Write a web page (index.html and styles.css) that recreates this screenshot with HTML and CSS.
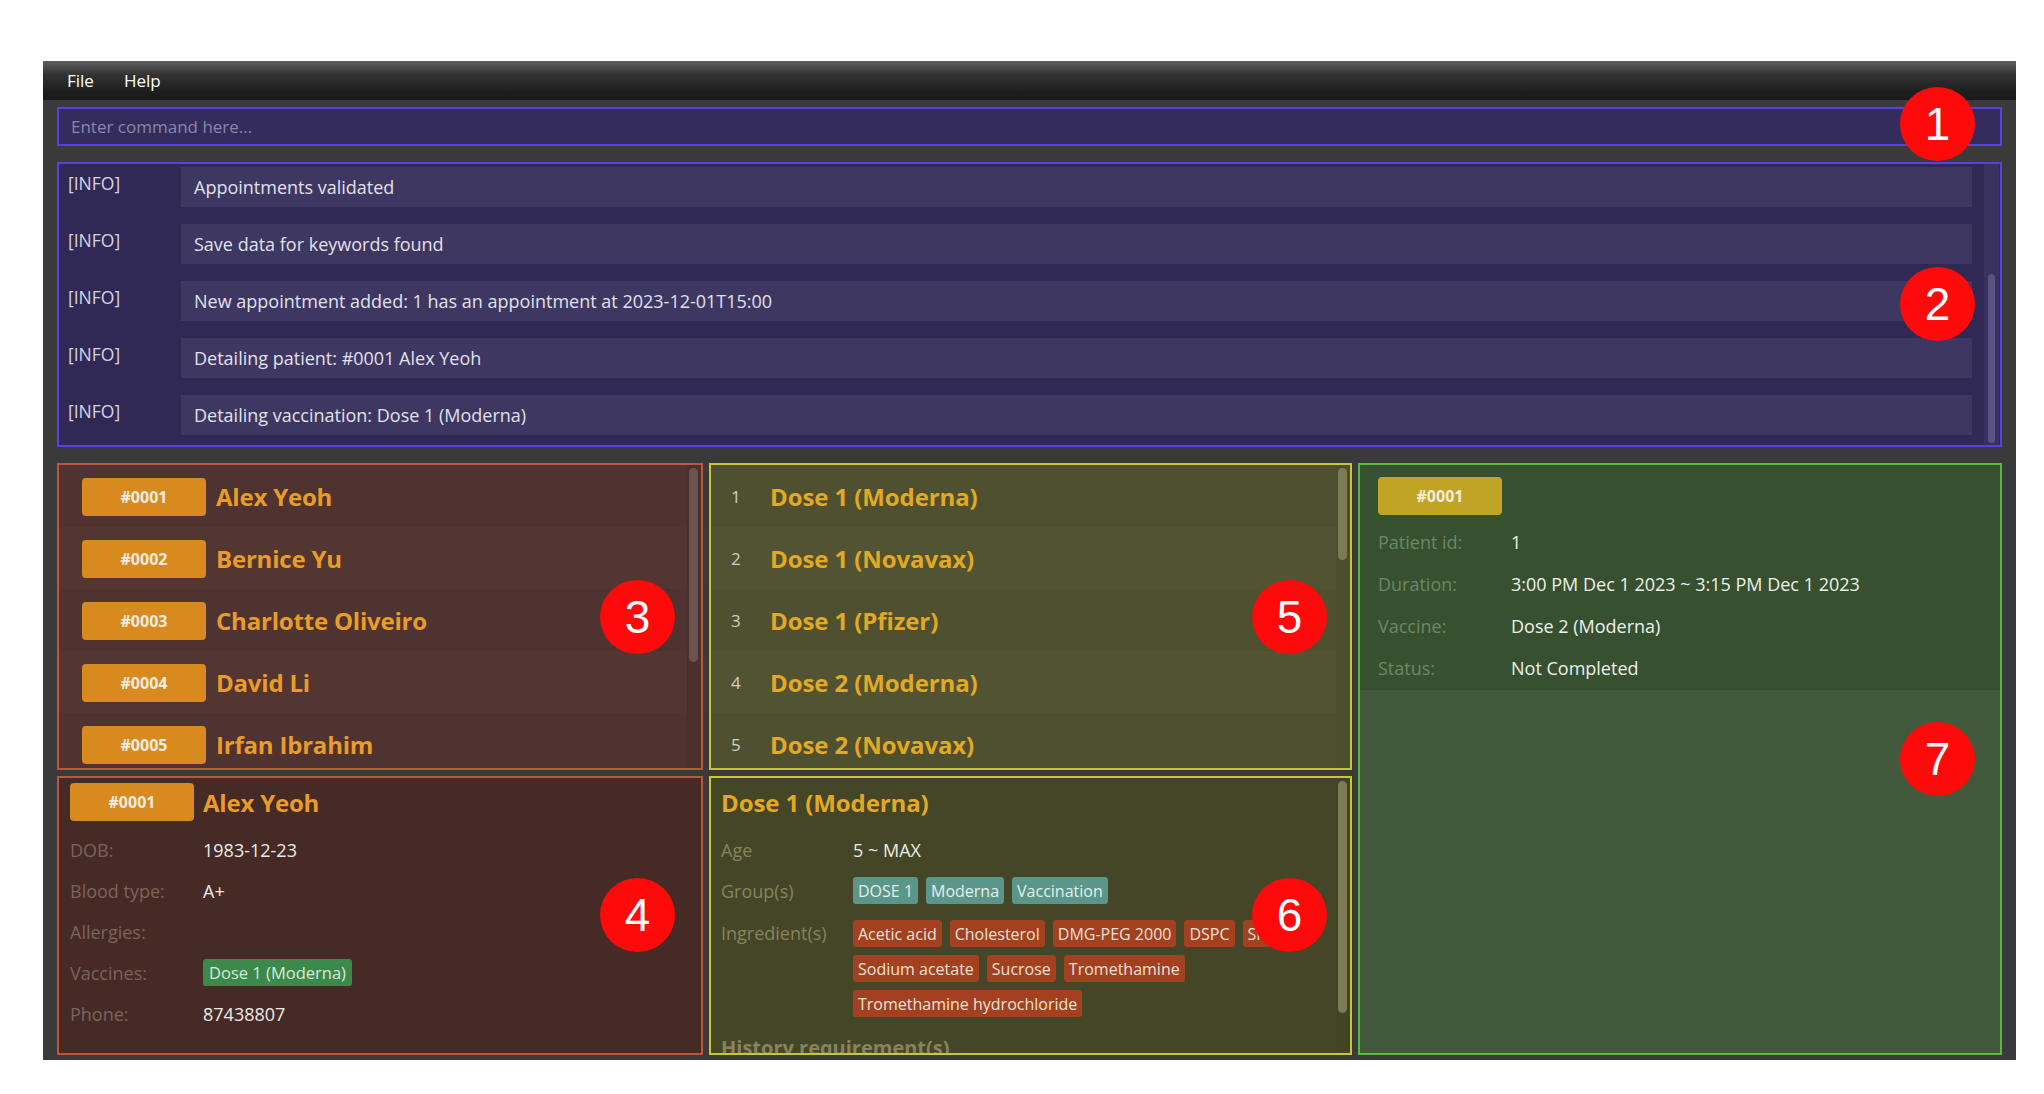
FILE: index.html
```html
<!DOCTYPE html>
<html>
<head>
<meta charset="utf-8">
<link rel="stylesheet" href="styles.css">
</head>
<body>
<div class="window">
  <div class="menubar">
    <span class="menu-item">File</span>
    <span class="menu-item">Help</span>
  </div>
  <div class="content">
    <div class="command">Enter command here...</div>
    <div class="results">
      <div class="result-list">
        <div class="result-row"><div class="result-label">[INFO]</div><div class="result-msg">Appointments validated</div></div>
        <div class="result-row"><div class="result-label">[INFO]</div><div class="result-msg">Save data for keywords found</div></div>
        <div class="result-row"><div class="result-label">[INFO]</div><div class="result-msg">New appointment added: 1 has an appointment at 2023-12-01T15:00</div></div>
        <div class="result-row"><div class="result-label">[INFO]</div><div class="result-msg">Detailing patient: #0001 Alex Yeoh</div></div>
        <div class="result-row"><div class="result-label">[INFO]</div><div class="result-msg">Detailing vaccination: Dose 1 (Moderna)</div></div>
      </div>
      <div class="result-gap"></div>
      <div class="result-track"><div class="result-thumb"></div></div>
    </div>
    <div class="panels">
      <div class="col">
        <div class="panel patients">
          <div class="list">
            <div class="prow"><span class="badge orange">#0001</span><span class="pname">Alex Yeoh</span></div>
            <div class="prow"><span class="badge orange">#0002</span><span class="pname">Bernice Yu</span></div>
            <div class="prow"><span class="badge orange">#0003</span><span class="pname">Charlotte Oliveiro</span></div>
            <div class="prow"><span class="badge orange">#0004</span><span class="pname">David Li</span></div>
            <div class="prow"><span class="badge orange">#0005</span><span class="pname">Irfan Ibrahim</span></div>
          </div>
          <div class="track"><div class="thumb thumb-patients"></div></div>
        </div>
        <div class="panel patient-detail">
          <div class="head"><span class="badge orange">#0001</span><span class="pname">Alex Yeoh</span></div>
          <div class="drow first"><span class="dlabel">DOB:</span><span class="dval">1983-12-23</span></div>
          <div class="drow"><span class="dlabel">Blood type:</span><span class="dval">A+</span></div>
          <div class="drow"><span class="dlabel">Allergies:</span><span class="dval"></span></div>
          <div class="drow"><span class="dlabel">Vaccines:</span><span class="dval"><span class="tag green">Dose 1 (Moderna)</span></span></div>
          <div class="drow"><span class="dlabel">Phone:</span><span class="dval">87438807</span></div>
        </div>
      </div>
      <div class="col">
        <div class="panel vaccines">
          <div class="list">
            <div class="vrow"><span class="vnum">1</span><span class="vname">Dose 1 (Moderna)</span></div>
            <div class="vrow"><span class="vnum">2</span><span class="vname">Dose 1 (Novavax)</span></div>
            <div class="vrow"><span class="vnum">3</span><span class="vname">Dose 1 (Pfizer)</span></div>
            <div class="vrow"><span class="vnum">4</span><span class="vname">Dose 2 (Moderna)</span></div>
            <div class="vrow"><span class="vnum">5</span><span class="vname">Dose 2 (Novavax)</span></div>
          </div>
          <div class="track"><div class="thumb thumb-vaccines"></div></div>
        </div>
        <div class="panel vaccine-detail">
          <div class="vd-body">
            <div class="vd-title">Dose 1 (Moderna)</div>
            <div class="vd-row age"><span class="vlabel">Age</span><span class="vval">5 ~ MAX</span></div>
            <div class="vd-row groups"><span class="vlabel">Group(s)</span>
              <span class="tags"><span class="tag teal">DOSE 1</span><span class="tag teal">Moderna</span><span class="tag teal">Vaccination</span></span>
            </div>
            <div class="vd-row ingredients"><span class="vlabel">Ingredient(s)</span>
              <span class="tags"><span class="tag rust">Acetic acid</span><span class="tag rust">Cholesterol</span><span class="tag rust">DMG-PEG 2000</span><span class="tag rust">DSPC</span><span class="tag rust">SM-102</span><span class="tag rust">Sodium acetate</span><span class="tag rust">Sucrose</span><span class="tag rust">Tromethamine</span><span class="tag rust">Tromethamine hydrochloride</span></span>
            </div>
            <div class="vd-history">History requirement(s)</div>
          </div>
          <div class="track"><div class="thumb thumb-vd"></div></div>
        </div>
      </div>
      <div class="col">
        <div class="panel appointment">
          <div class="appt-top">
            <span class="badge gold">#0001</span>
            <div class="arow first"><span class="alabel">Patient id:</span><span class="aval">1</span></div>
            <div class="arow"><span class="alabel">Duration:</span><span class="aval">3:00 PM Dec 1 2023 ~ 3:15 PM Dec 1 2023</span></div>
            <div class="arow"><span class="alabel">Vaccine:</span><span class="aval">Dose 2 (Moderna)</span></div>
            <div class="arow"><span class="alabel">Status:</span><span class="aval">Not Completed</span></div>
          </div>
        </div>
      </div>
    </div>
  </div>
</div>
<div class="marker m1">1</div>
<div class="marker m2">2</div>
<div class="marker m3">3</div>
<div class="marker m4">4</div>
<div class="marker m5">5</div>
<div class="marker m6">6</div>
<div class="marker m7">7</div>
</body>
</html>
```

FILE: styles.css
```css
* { box-sizing: border-box; }
html, body { margin: 0; padding: 0; }
body {
  background: #ffffff;
  font-family: "Open Sans", "Noto Sans", "DejaVu Sans", sans-serif;
  position: relative;
  width: 2044px;
  height: 1094px;
  overflow: hidden;
}
.window {
  margin: 61px 0 0 43px;
  width: 1973px;
  height: 999px;
  background: #3a3a3a;
  display: flex;
  flex-direction: column;
}
.menubar {
  height: 39px;
  flex: none;
  background: linear-gradient(#5f5f5f 0%, #333333 35%, #1d1d1d 80%, #1a1a1a 100%);
  display: flex;
  align-items: center;
  padding-left: 24px;
  gap: 30px;
  color: #ffffff;
  font-size: 17px;
}
.content {
  flex: 1;
  min-height: 0;
  padding: 7px 14px 5px 14px;
  display: flex;
  flex-direction: column;
}
.command {
  height: 39px;
  flex: none;
  border: 2px solid #5542e2;
  background: #342c5d;
  color: #8b86ab;
  font-size: 17px;
  padding-left: 12px;
  display: flex;
  align-items: center;
}
.results {
  margin-top: 16px;
  height: 285px;
  flex: none;
  border: 2px solid #5542e2;
  background: #302955;
  display: flex;
}
.result-list { flex: 1; padding-top: 3px; overflow: hidden; }
.result-row { height: 57px; display: flex; }
.result-label {
  width: 122px;
  padding-left: 9px;
  padding-top: 4px;
  color: #d6d4e2;
  font-size: 17.5px;
}
.result-msg {
  height: 40px;
  flex: 1;
  background: #3d3762;
  color: #e2e0ec;
  font-size: 18px;
  padding-left: 13px;
  display: flex;
  align-items: center;
}
.result-gap { width: 12px; }
.result-track {
  width: 15px;
  margin-right: 1px;
  background: #39325f;
  padding: 110px 4px 2px 4px;
}
.result-thumb { height: 100%; background: #5a5283; border-radius: 4px; }

.panels {
  margin-top: 16px;
  flex: 1;
  min-height: 0;
  display: grid;
  grid-template-columns: 646px 643px 1fr;
  grid-template-rows: minmax(0, 1fr);
  column-gap: 6px;
}
.col { display: flex; flex-direction: column; gap: 6px; min-height: 0; }
.panel { border: 2px solid; overflow: hidden; display: flex; min-height: 0; }
.list { flex: 1; overflow: hidden; }
.track { width: 14px; padding: 3px 3px 0 2px; }
.thumb { border-radius: 5px; }

.badge {
  display: inline-flex;
  align-items: center;
  justify-content: center;
  width: 124px;
  height: 38px;
  border-radius: 4px;
  color: #f6ece0;
  font-weight: 700;
  font-size: 16px;
  flex: none;
}
.badge.orange { background: #d98a1f; }
.badge.gold { background: #c2a424; }
.pname {
  color: #e99c28;
  font-weight: 700;
  font-size: 24px;
  letter-spacing: -0.2px;
  margin-left: 10px;
}

/* patients list */
.patients { height: 307px; flex: none; background: #4f3330; border-color: #c2553e; }
.prow { height: 62px; display: flex; align-items: center; padding-left: 23px; padding-top: 1px; }
.prow:nth-child(even) { background: #533631; }
.patients .track { background: #4c302c; }
.thumb-patients { height: 194px; background: #6b5350; }

/* patient detail */
.patient-detail {
  flex: 1;
  background: #462a25;
  border-color: #c2553e;
  flex-direction: column;
  padding: 5px 11px 0 11px;
}
.head { display: flex; align-items: center; flex: none; }
.head .pname { margin-left: 9px; }
.drow { display: flex; align-items: center; height: 27px; margin-top: 14px; font-size: 18px; flex: none; }
.drow.first { margin-top: 15px; }
.dlabel { width: 133px; color: #7e625c; }
.dval { color: #ecebea; }

.tag {
  display: inline-flex;
  align-items: center;
  height: 27px;
  padding: 0 5px;
  border-radius: 3px;
  font-size: 16px;
  color: #ebe6e0;
}
.tag.green { background: #3b8a4b; color: #dbe8d8; padding: 0 6px; font-size: 16.5px; }
.tag.teal { background: #5a9689; color: #e6efec; }
.tag.rust { background: #a2401f; color: #f0e2da; }

/* vaccines list */
.vaccines { height: 307px; flex: none; background: #4f5030; border-color: #c6c637; }
.vrow { height: 62px; display: flex; align-items: center; padding-left: 20px; padding-top: 1px; }
.vrow:nth-child(even) { background: #525332; }
.vnum { width: 39px; color: #cfcfc4; font-size: 17px; }
.vname { color: #e2a923; font-weight: 700; font-size: 24px; letter-spacing: -0.1px; }
.vaccines .track { background: #4d4e2e; }
.thumb-vaccines { height: 92px; background: #7b7b58; }

/* vaccine detail */
.vaccine-detail { flex: 1; background: #454627; border-color: #c6c637; }
.vd-body { flex: 1; padding: 8px 0 0 10px; overflow: hidden; }
.vd-title { color: #e2a923; font-weight: 700; font-size: 24px; line-height: 34px; letter-spacing: -0.1px; }
.vd-row { display: flex; font-size: 18px; }
.vlabel { width: 132px; flex: none; color: #86845c; }
.vval { color: #ecece4; }
.vd-row.age { margin-top: 16px; height: 27px; align-items: center; }
.vd-row.groups { margin-top: 14px; align-items: center; }
.vd-row.ingredients { margin-top: 16px; }
.vd-row.ingredients .vlabel { line-height: 27px; }
.tags { display: flex; flex-wrap: wrap; gap: 8px; width: 480px; }
.vd-history {
  margin-top: 17px;
  color: #86845c;
  font-weight: 700;
  font-size: 20px;
}
.vaccine-detail .track { background: #434425; }
.thumb-vd { height: 232px; background: #7b7b58; }

/* appointment */
.appointment {
  flex: 1;
  background: #425a3b;
  border-color: #56bc3d;
  flex-direction: column;
}
.appt-top {
  background: #37502f;
  padding: 12px 18px 8px 18px;
}
.arow { display: flex; align-items: center; height: 28px; margin-top: 14px; font-size: 18px; }
.arow.first { margin-top: 13px; }
.alabel { width: 133px; color: #6c8766; }
.aval { color: #eef0ea; }

/* annotation markers */
.marker {
  position: absolute;
  width: 75px;
  height: 74px;
  border-radius: 50%;
  background: #ff0a0a;
  color: #ffffff;
  font-family: "Liberation Sans", Arial, sans-serif;
  font-size: 46px;
  display: flex;
  align-items: center;
  justify-content: center;
}
.m1 { left: 1900px; top: 87px; }
.m2 { left: 1900px; top: 267px; }
.m3 { left: 600px; top: 580px; }
.m4 { left: 600px; top: 878px; }
.m5 { left: 1252px; top: 580px; }
.m6 { left: 1252px; top: 878px; }
.m7 { left: 1900px; top: 722px; }
```
